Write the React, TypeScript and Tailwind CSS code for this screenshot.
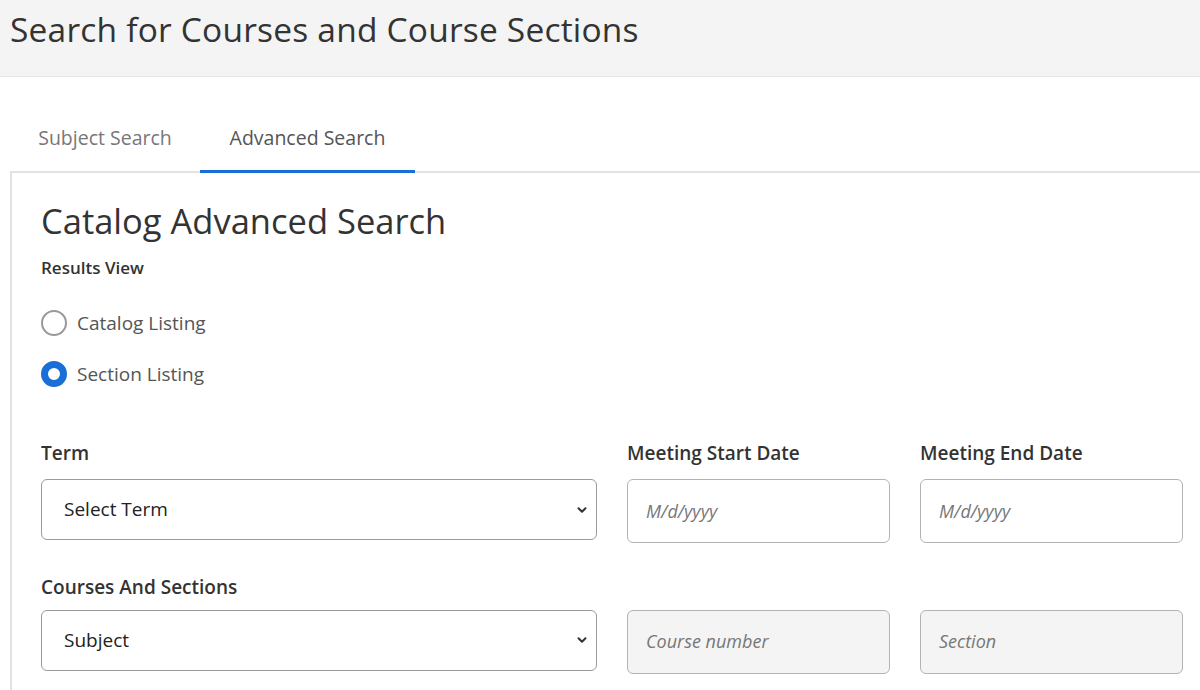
import React from "react";

const Chevron = () => (
  <svg width="12" height="12" viewBox="0 0 12 12" className="absolute right-[8px] top-1/2 -translate-y-1/2">
    <path d="M2.5 4.2 L6 7.8 L9.5 4.2" fill="none" stroke="#333" strokeWidth="2" strokeLinecap="round" strokeLinejoin="round" />
  </svg>
);

const Select = ({ text }: { text: string }) => (
  <div className="relative h-[61px] rounded-[6px] border border-[#9a9a9a] bg-white flex items-center pl-[22px] text-[19px] text-[#222]">
    {text}
    <Chevron />
  </div>
);

const Input = ({ text, disabled }: { text: string; disabled?: boolean }) => (
  <div className={`h-[64px] rounded-[6px] border border-[#b3b3b3] flex items-center pl-[18px] text-[18px] italic text-[#777] ${disabled ? "bg-[#f4f4f4]" : "bg-white"}`}>
    {text}
  </div>
);

export default function App() {
  return (
    <div className="w-[1200px] h-[690px] overflow-hidden bg-white text-[#333]" style={{ fontFamily: '"Open Sans", sans-serif' }}>
      <div className="h-[77px] bg-[#f4f4f4] border-b border-[#e6e6e6] pl-[10px] pt-[4px] text-[33.5px] text-[#333] tracking-[0.2px]">
        Search for Courses and Course Sections
      </div>
      <div className="ml-[10px] mt-[41px] flex h-[55px] border-b-2 border-[#e2e2e2]">
        <div className="w-[190px] flex justify-center pt-[5px] text-[19.5px] text-[#777]">Subject Search</div>
        <div className="w-[215px] flex justify-center pt-[5px] text-[19.5px] text-[#555] border-b-[3px] border-[#1a6ed8] -mb-[2px]">Advanced Search</div>
      </div>
      <div className="ml-[10px] border-l-2 border-[#e2e2e2] pl-[29px] pr-[18px] pt-[26px] h-[520px]">
        <div className="text-[34.5px] leading-[44px] text-[#333]">Catalog Advanced Search</div>
        <div className="mt-[12px] text-[17px] font-semibold text-[#333]">Results View</div>
        <div className="mt-[28px] flex items-center gap-[10px] text-[19px] text-[#555]">
          <span className="w-[26px] h-[26px] rounded-full border-2 border-[#999] bg-white" />
          Catalog Listing
        </div>
        <div className="mt-[23px] flex items-center gap-[10px] text-[19px] text-[#555]">
          <span className="w-[26px] h-[26px] rounded-full border-[7px] border-[#1a6ed8] bg-white" />
          Section Listing
        </div>
        <div className="mt-[50px] grid grid-cols-[556px_263px_263px] gap-x-[30px] items-end">
          <div className="text-[19px] font-semibold text-[#333] mb-[12px]">Term</div>
          <div className="text-[19px] font-semibold text-[#333] mb-[12px]">Meeting Start Date</div>
          <div className="text-[19px] font-semibold text-[#333] mb-[12px]">Meeting End Date</div>
          <div className="self-start"><Select text="Select Term" /></div>
          <Input text="M/d/yyyy" />
          <Input text="M/d/yyyy" />
          <div className="col-span-3 mt-[30px] text-[19px] font-semibold text-[#333] mb-[8px]">Courses And Sections</div>
          <div className="self-start"><Select text="Subject" /></div>
          <Input text="Course number" disabled />
          <Input text="Section" disabled />
        </div>
      </div>
    </div>
  );
}
